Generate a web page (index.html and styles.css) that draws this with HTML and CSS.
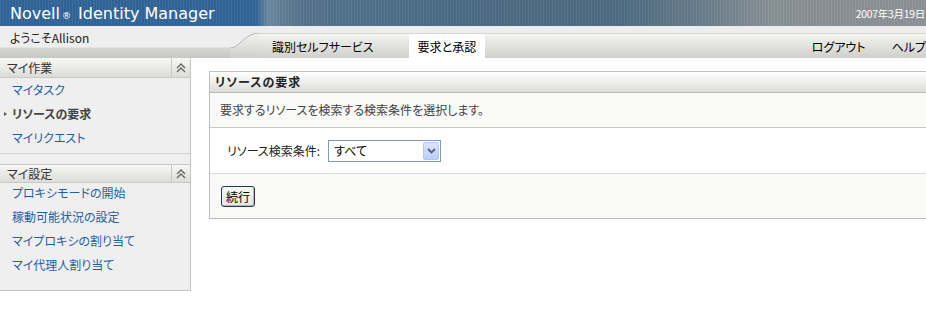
FILE: index.html
```html
<!DOCTYPE html>
<html lang="ja">

<head>
    <meta charset="UTF-8">
    <title>Identity Manager</title>
    <link rel="stylesheet" href="styles.css">
</head>

<body>
    <!-- Banner -->
    <div class="banner">
        <span class="brand">Novell<span class="reg">®</span> Identity Manager</span>
        <span class="date">2007年3月19日</span>
    </div>

    <!-- Welcome + tabs -->
    <div class="subbar">
        <div class="welcome">ようこそAllison</div>
        <div class="tabbar">
            <svg class="tab_curve" width="30" height="25" viewBox="0 0 30 25">
                <defs>
                    <linearGradient id="tabfill" x1="0" y1="0" x2="0" y2="1">
                        <stop offset="0" stop-color="#f3f3f1" />
                        <stop offset="1" stop-color="#cfcfcb" />
                    </linearGradient>
                </defs>
                <path d="M0 25 L0 15 C10 15 14 0 30 0 L30 25 Z" fill="url(#tabfill)" />
                <path d="M0 15 C10 15 14 0 30 0" fill="none" stroke="#b9b9b5" stroke-width="1" />
            </svg>
            <div class="tabs">
                <a class="tab" href="#">識別セルフサービス</a>
                <a class="tab tab_active" href="#">要求と承認</a>
                <span class="tab_space"></span>
                <a class="tab tab_util" href="#">ログアウト</a>
                <a class="tab tab_util" href="#">ヘルプ</a>
            </div>
        </div>
    </div>

    <div class="content">
        <!-- Sidebar -->
        <div class="sidebar">
            <div class="side_section side_first">
                <div class="side_head">
                    <span class="side_title">マイ作業</span>
                    <span class="side_toggle">
                        <svg width="10" height="10" viewBox="0 0 10 10"><path d="M1 5 L5 1 L9 5 M1 9 L5 5 L9 9" fill="none" stroke="#666" stroke-width="1.4" /></svg>
                    </span>
                </div>
                <ul class="side_list">
                    <li><a href="#">マイタスク</a></li>
                    <li class="current"><span class="bullet"></span>リソースの要求</li>
                    <li><a href="#">マイリクエスト</a></li>
                </ul>
            </div>
            <div class="side_section">
                <div class="side_head">
                    <span class="side_title">マイ設定</span>
                    <span class="side_toggle">
                        <svg width="10" height="10" viewBox="0 0 10 10"><path d="M1 5 L5 1 L9 5 M1 9 L5 5 L9 9" fill="none" stroke="#666" stroke-width="1.4" /></svg>
                    </span>
                </div>
                <ul class="side_list">
                    <li><a href="#">プロキシモードの開始</a></li>
                    <li><a href="#">稼動可能状況の設定</a></li>
                    <li><a href="#">マイプロキシの割り当て</a></li>
                    <li><a href="#">マイ代理人割り当て</a></li>
                </ul>
            </div>
        </div>

        <!-- Main panel -->
        <div class="main">
            <div class="panel">
                <div class="panel_head">リソースの要求</div>
                <div class="panel_desc">要求するリソースを検索する検索条件を選択します。</div>
                <div class="panel_field">
                    <label class="field_label">リソース検索条件:</label>
                    <div class="fake_select">
                        <span class="select_text">すべて</span>
                        <span class="select_btn">
                            <svg width="9" height="6" viewBox="0 0 9 6"><path d="M1 1 L4.5 4.5 L8 1" fill="none" stroke="#4d6185" stroke-width="1.8" /></svg>
                        </span>
                    </div>
                </div>
                <div class="panel_actions">
                    <button type="button" class="go_btn">続行</button>
                </div>
            </div>
        </div>
    </div>
</body>

</html>
```

FILE: styles.css
```css
body {
    margin: 0;
    width: 926px;
    height: 315px;
    overflow: hidden;
    background-color: #ffffff;
    font-family: "Noto Sans CJK JP", "DejaVu Sans", sans-serif;
    font-size: 12px;
    font-feature-settings: "palt";
    color: #333;
}

a {
    text-decoration: none;
}

/* Banner */
.banner {
    height: 26px;
    display: flex;
    align-items: center;
    justify-content: space-between;
    padding-left: 10px;
    background:
        repeating-linear-gradient(90deg, rgba(255, 255, 255, 0.05) 0 1px, rgba(0, 0, 0, 0.04) 1px 3px),
        linear-gradient(90deg, #33669a 0, #33669a 256px, #6e8aa2 268px, #56758f 300px, #4c6c86 450px, #4f6d84 620px, #6a7e8c 700px, #8a9399 770px, #8d9397 926px);
}

.banner .brand {
    font-family: "DejaVu Sans", sans-serif;
    font-size: 16px;
    color: #ffffff;
    font-feature-settings: normal;
    white-space: nowrap;
}

.banner .reg {
    font-size: 9px;
    margin: 0 2px 0 2px;
}

.banner .date {
    color: #ffffff;
    font-size: 10.5px;
    letter-spacing: -0.3px;
    margin-right: 1px;
    white-space: nowrap;
}

/* Welcome + tabs */
.subbar {
    height: 32px;
    display: flex;
    background: linear-gradient(to bottom, #ededed 0, #efefef 21px, #d6d6d2 22px, #c6c6c2 32px);
}

.welcome {
    width: 230px;
    padding: 3px 0 0 10px;
    box-sizing: border-box;
    color: #222;
    font-size: 12px;
}

.tabbar {
    flex: 1;
    display: flex;
    margin-top: 7px;
    height: 25px;
}

.tab_curve {
    display: block;
    flex: none;
}

.tabs {
    flex: 1;
    display: flex;
    align-items: stretch;
    background: linear-gradient(to bottom, #f3f3f1, #cfcfcb);
    border-top: 1px solid #d6d6d2;
    box-sizing: border-box;
}

.tab {
    display: flex;
    align-items: center;
    color: #000;
    font-size: 12px;
    padding: 0 10px;
    white-space: nowrap;
}

.tabs .tab:first-child {
    margin-left: 2px;
}

.tab_active {
    background-color: #ffffff;
    margin-left: 25px;
    padding: 0 9px;
}

.tab_space {
    flex: 1;
}

.tab_util {
    padding: 0 0 0 26px;
}

/* Layout */
.content {
    display: flex;
    align-items: flex-start;
}

/* Sidebar */
.sidebar {
    width: 190px;
    height: 232px;
    background-color: #efefef;
    border-right: 1px solid #c4c4c4;
    border-bottom: 1px solid #c4c4c4;
}

.side_head {
    display: flex;
    height: 19px;
    border-bottom: 1px solid #c8c8c4;
    background: linear-gradient(to bottom, #f7f7f5, #dcdcd8);
}

.side_section + .side_section .side_head {
    border-top: 1px solid #c8c8c4;
    height: 17px;
}

.side_title {
    flex: 1;
    display: flex;
    align-items: center;
    padding-left: 7px;
    color: #333;
}

.side_toggle {
    width: 18px;
    display: flex;
    align-items: center;
    justify-content: center;
    border-left: 1px solid #c8c8c4;
}

.side_list {
    list-style: none;
    margin: 0;
    padding: 0;
}

.side_first {
    border-bottom: 1px solid #d4d4d2;
    margin-bottom: 10px;
}

.side_first .side_list {
    padding-bottom: 3px;
}

.side_list li {
    height: 24px;
    line-height: 24px;
    padding-left: 12px;
    position: relative;
}

.side_section + .side_section .side_list {
    margin-top: -2px;
}

.side_list a {
    color: #1f5f9e;
}

.side_list .current {
    font-weight: bold;
    color: #444;
}

.bullet {
    position: absolute;
    left: 4px;
    top: 10px;
    width: 0;
    height: 0;
    border-top: 2px solid transparent;
    border-bottom: 2px solid transparent;
    border-left: 3px solid #555;
}

/* Main */
.main {
    flex: 1;
    padding: 13px 0 0 18px;
}

.panel {
    margin-right: -20px;
    border: 1px solid #c0c0c0;
    border-bottom-color: #b8b8b8;
}

.panel_head {
    height: 20px;
    line-height: 20px;
    padding-left: 5px;
    font-weight: bold;
    color: #222;
    letter-spacing: 1px;
    background: linear-gradient(to bottom, #ffffff, #dcdcd8);
    border-bottom: 1px solid #b8b8b4;
}

.panel_desc {
    height: 34px;
    line-height: 34px;
    padding-left: 10px;
    color: #444;
    background-color: #f9f9f7;
    border-bottom: 1px solid #c8c8c8;
}

.panel_field {
    height: 45px;
    display: flex;
    align-items: center;
    padding-left: 17px;
    background-color: #ffffff;
    border-bottom: 1px solid #dcdcdc;
}

.field_label {
    color: #222;
    margin-right: 8px;
}

.fake_select {
    width: 113px;
    height: 22px;
    box-sizing: border-box;
    border: 1px solid #7f9db9;
    display: flex;
    align-items: center;
    justify-content: space-between;
    padding: 1px;
    background: #fff;
}

.select_text {
    padding-left: 4px;
    color: #000;
}

.select_btn {
    width: 16px;
    height: 18px;
    display: flex;
    align-items: center;
    justify-content: center;
    background: linear-gradient(to bottom, #dbe5fb, #bccdf7);
    border: 1px solid #b4c6f1;
    box-sizing: border-box;
    border-radius: 2px;
}

.panel_actions {
    height: 44px;
    display: flex;
    align-items: center;
    padding-left: 11px;
    background-color: #f9f9f7;
}

.go_btn {
    height: 21px;
    width: 34px;
    padding: 0;
    font-family: "Noto Sans CJK JP", sans-serif;
    font-size: 12px;
    color: #000;
    background: linear-gradient(to bottom, #f8f8f4, #e6e6de);
    border: 1px solid #1c3a5c;
    border-radius: 3px;
    box-shadow: inset -1px -1px 0 #b8b8b0;
}
```
